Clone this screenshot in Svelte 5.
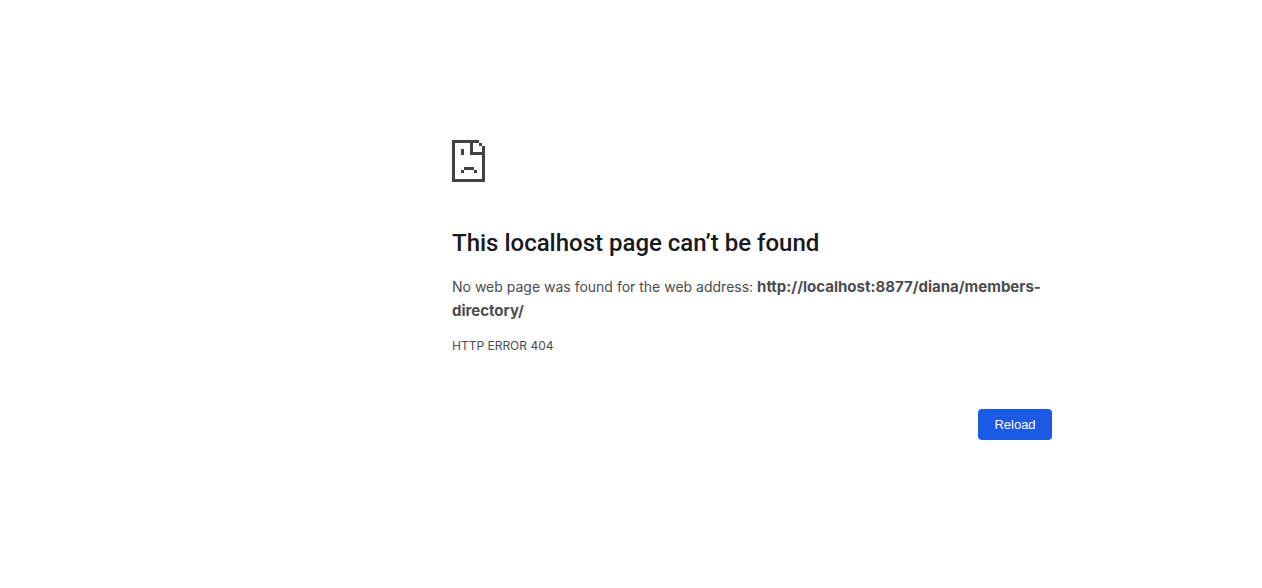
<script>
  const address = 'http://localhost:8877/diana/members-directory/';

  function reload() {
    window.location.reload();
  }
</script>

<main class="error-page">
  <svg class="icon" viewBox="0 0 33 42" width="33" height="42" shape-rendering="crispEdges" aria-hidden="true">
    <path d="M0 0H27V3H21V12H30V6H33V42H0ZM3 3V39H30V15H18V3Z" fill-rule="evenodd" />
    <path d="M27 3H30V6H27ZM9 9H12V15H9ZM12 27H22V30H12ZM9 30H12V33H9ZM22 30H25V33H22Z" />
  </svg>
  <h1>This localhost page can’t be found</h1>
  <p class="summary">No web page was found for the web address: <strong>{address}</strong></p>
  <p class="code">HTTP ERROR 404</p>
  <div class="actions">
    <button type="button" onclick={reload}>Reload</button>
  </div>
</main>

<style>
  :global(body) {
    margin: 0;
    background: #fff;
  }

  .error-page {
    box-sizing: border-box;
    max-width: 1052px;
    padding: 140px 0 40px 452px;
    color: #4c4c4f;
    font-family: Inter, sans-serif;
    font-size: 14px;
    line-height: 24px;
  }

  .icon {
    display: block;
    fill: #414141;
  }

  h1 {
    margin: 46px 0 16px;
    color: #16191d;
    font-family: Roboto, sans-serif;
    font-size: 24px;
    font-weight: 500;
    line-height: 31px;
  }

  .summary {
    margin: 0;
  }

  .summary strong {
    font-size: 15px;
  }

  .code {
    margin: 15px 0 0;
    font-size: 12px;
    line-height: 16px;
  }

  .actions {
    display: flex;
    justify-content: flex-end;
    margin-top: 55px;
  }

  button {
    min-width: 74px;
    border: 0;
    border-radius: 4px;
    padding: 8px 16px;
    background: #1a5ae4;
    color: #fff;
    font-family: "Liberation Sans", Arial, sans-serif;
    font-size: 13px;
    line-height: 15px;
    cursor: pointer;
  }
</style>
